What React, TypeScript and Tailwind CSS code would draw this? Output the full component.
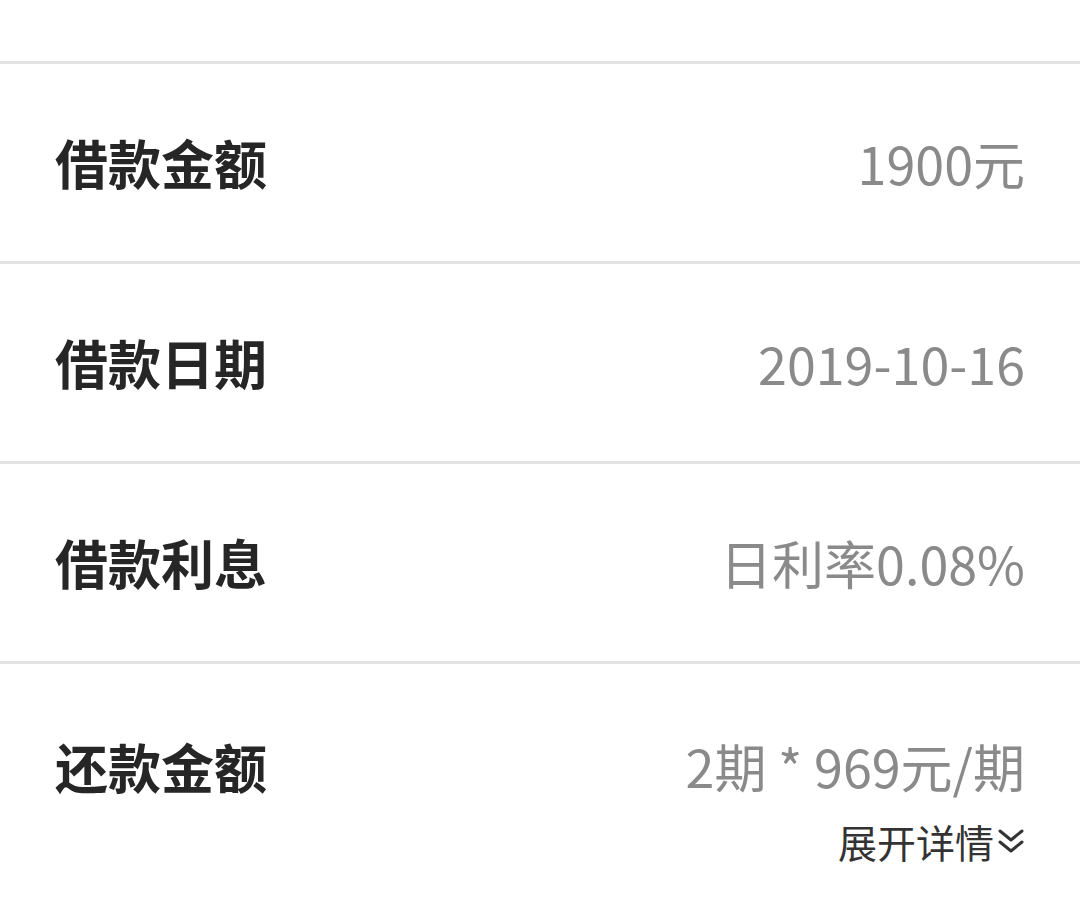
// Loan detail list: label on the left, value on the right, hairline between rows.

const rows = [
  { label: "借款金额", value: "1900元" },
  { label: "借款日期", value: "2019-10-16" },
  { label: "借款利息", value: "日利率0.08%" },
];

const font = { fontFamily: '"Noto Sans CJK SC", "Noto Sans", sans-serif' };

function DoubleChevron() {
  return (
    <svg width="28" height="30" viewBox="0 0 28 30" fill="none" stroke="#333" strokeWidth="3" strokeLinecap="round" strokeLinejoin="round">
      <path d="M3 5 L14 14 L25 5" />
      <path d="M3 16 L14 25 L25 16" />
    </svg>
  );
}

export default function App() {
  return (
    <div className="w-[1080px] h-[903px] overflow-hidden bg-white" style={font}>
      <div className="h-[61px]" />

      {rows.map((r) => (
        <div key={r.label} className="h-[200px] border-t-[3px] border-[#e2e2e2] px-[55px] flex items-center justify-between">
          <span className="text-[53px] leading-none font-bold text-[#262626]">{r.label}</span>
          <span className="text-[52px] leading-none text-[#8a8a8a]">{r.value}</span>
        </div>
      ))}

      <div className="border-t-[3px] border-[#e2e2e2] px-[55px] pt-[72px]">
        <div className="flex items-center justify-between h-[60px]">
          <span className="text-[53px] leading-none font-bold text-[#262626]">还款金额</span>
          <span className="text-[52px] leading-none text-[#8a8a8a]">2期 * 969元/期</span>
        </div>
        <div className="mt-[20px] flex justify-end items-center gap-[3px] h-[50px] text-[39px] leading-none text-[#333]">
          <span>展开详情</span>
          <DoubleChevron />
        </div>
      </div>
    </div>
  );
}
